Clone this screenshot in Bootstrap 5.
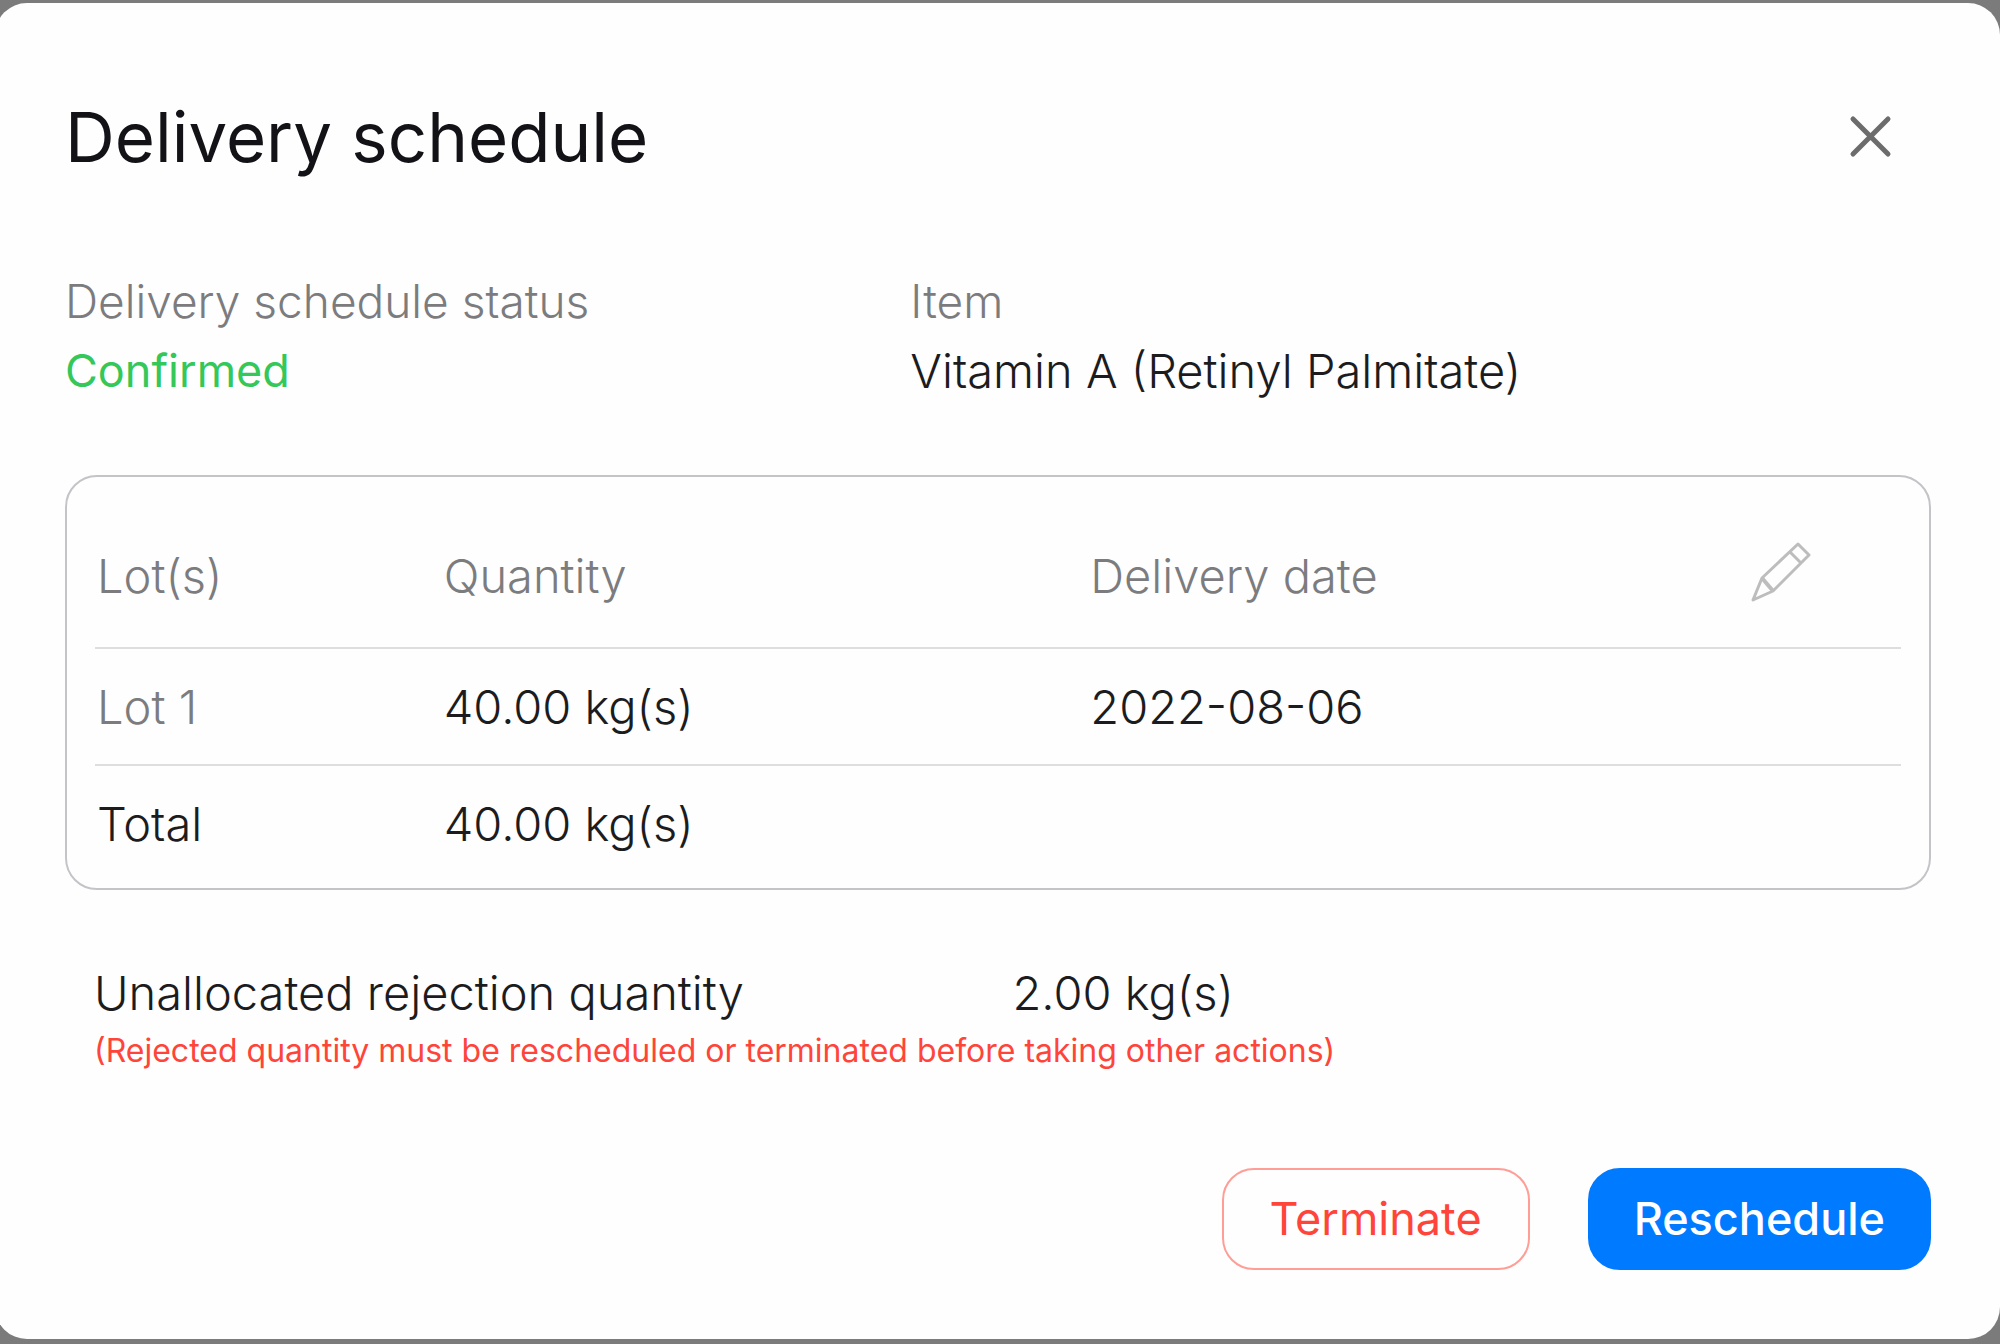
<!DOCTYPE html>
<html lang="en">
<head>
<meta charset="utf-8">
<meta name="viewport" content="width=device-width, initial-scale=1">
<title>Delivery schedule</title>
<link href="https://cdn.jsdelivr.net/npm/bootstrap@5.3.0/dist/css/bootstrap.min.css" rel="stylesheet">
<style>
  body { background: #7b7b7b; font-family: Inter, "Liberation Sans", sans-serif; font-size: 47px; font-weight: 300; line-height: 68px; color: #1c1c1e; }
  .dialog-panel { background: #fefefe; border-radius: 32px; margin: 3px 0 5px -5px; padding: 88px 69px 69px 70px; }
  .dialog-title { font-size: 69px; font-weight: 400; line-height: 92px; color: #121217; }
  .close-btn { line-height: 0; margin-right: 38px; color: #6c6c6c; }
  .muted-text, .lots-table .muted-text { color: #7c7c7e; }
  .info-grid { display: grid; grid-template-columns: 45.3% 1fr; margin-top: 83px; line-height: 70px; }
  .info-grid .muted-text { font-size: 46px; }
  .status-ok { color: #34c759; font-size: 45px; font-weight: 400; }
  .lots-box { border: 2px solid #c4c4c8; border-radius: 32px; margin-top: 69px; padding: 28px 28px 7px; }
  .lots-table { table-layout: fixed; color: inherit; }
  .lots-table th, .lots-table td { font-weight: 300; padding: 24px 2px 23px; border-bottom: 1px solid #dedede; background: none; color: inherit; }
  .lots-table thead th { padding: 37px 2px; vertical-align: top; }
  .lots-table > tbody { border: 0; }
  .lots-table tfoot > tr > * { border: 0; }
  .lots-table thead > tr > *, .lots-table tbody > tr > * { border-bottom-width: 2px; }
  .c-lot { width: 19.2%; } .c-qty { width: 35.8%; } .c-date { width: 36.6%; }
  .edit-btn { line-height: 0; color: #bdbdbd; }
  .rejection { margin-top: 69px; padding-left: 29px; }
  .rejection-grid { display: grid; grid-template-columns: 50% 1fr; }
  .warn-note { font-size: 32px; font-weight: 400; line-height: 48px; color: #ff453a; }
  .actions { gap: 58px; margin-top: 93px; }
  .action-btn { --bs-btn-font-size: 45px; --bs-btn-line-height: 68px; --bs-btn-border-width: 2px; --bs-btn-border-radius: 32px; --bs-btn-padding-y: 15px; --bs-btn-padding-x: 44px; --bs-btn-font-weight: 400; }
  .terminate-btn { --bs-btn-color: #ff453a; --bs-btn-border-color: #ff9d97; --bs-btn-padding-x: 46px; }
  .reschedule-btn { --bs-btn-color: #fff; --bs-btn-bg: #007aff; --bs-btn-border-color: #007aff; --bs-btn-font-weight: 500; }
</style>
</head>
<body>
<main class="dialog-panel" role="dialog" aria-labelledby="dialogTitle">
  <header class="d-flex justify-content-between align-items-center">
    <h1 class="dialog-title mb-0" id="dialogTitle">Delivery schedule</h1>
    <button type="button" class="close-btn btn p-0 border-0" aria-label="Close">
      <svg width="44" height="44" viewBox="0 0 44 44" fill="none" stroke="currentColor" stroke-width="5" stroke-linecap="round"><path d="M4 4l35 35M39 4L4 39"/></svg>
    </button>
  </header>

  <section class="info-grid">
    <div>
      <div class="muted-text">Delivery schedule status</div>
      <div class="status-ok">Confirmed</div>
    </div>
    <div>
      <div class="muted-text">Item</div>
      <div>Vitamin A (Retinyl Palmitate)</div>
    </div>
  </section>

  <section class="lots-box">
    <table class="table lots-table mb-0 align-middle">
      <colgroup><col class="c-lot"><col class="c-qty"><col class="c-date"><col></colgroup>
      <thead>
        <tr>
          <th scope="col" class="muted-text">Lot(s)</th>
          <th scope="col" class="muted-text">Quantity</th>
          <th scope="col" class="muted-text">Delivery date</th>
          <th>
            <button type="button" class="edit-btn btn p-0 border-0 d-block" aria-label="Edit lots">
              <svg width="60" height="60" viewBox="0 0 60 60" fill="none" stroke="currentColor" stroke-width="3" stroke-linejoin="round"><path d="M2 58L11 36L47 2L58 13L22 49ZM39 10L50 21"/><path stroke-width="4" d="M11 36L22 49"/></svg>
            </button>
          </th>
        </tr>
      </thead>
      <tbody>
        <tr><th scope="row" class="muted-text">Lot 1</th><td>40.00 kg(s)</td><td>2022-08-06</td><td></td></tr>
      </tbody>
      <tfoot>
        <tr><th scope="row">Total</th><td>40.00 kg(s)</td><td></td><td></td></tr>
      </tfoot>
    </table>
  </section>

  <section class="rejection">
    <div class="rejection-grid"><div>Unallocated rejection quantity</div><div>2.00 kg(s)</div></div>
    <div class="warn-note">(Rejected quantity must be rescheduled or terminated before taking other actions)</div>
  </section>

  <footer class="actions d-flex justify-content-end">
    <button type="button" class="btn action-btn terminate-btn">Terminate</button>
    <button type="button" class="btn action-btn reschedule-btn">Reschedule</button>
  </footer>
</main>
<script src="https://cdn.jsdelivr.net/npm/bootstrap@5.3.0/dist/js/bootstrap.bundle.min.js"></script>
</body>
</html>
